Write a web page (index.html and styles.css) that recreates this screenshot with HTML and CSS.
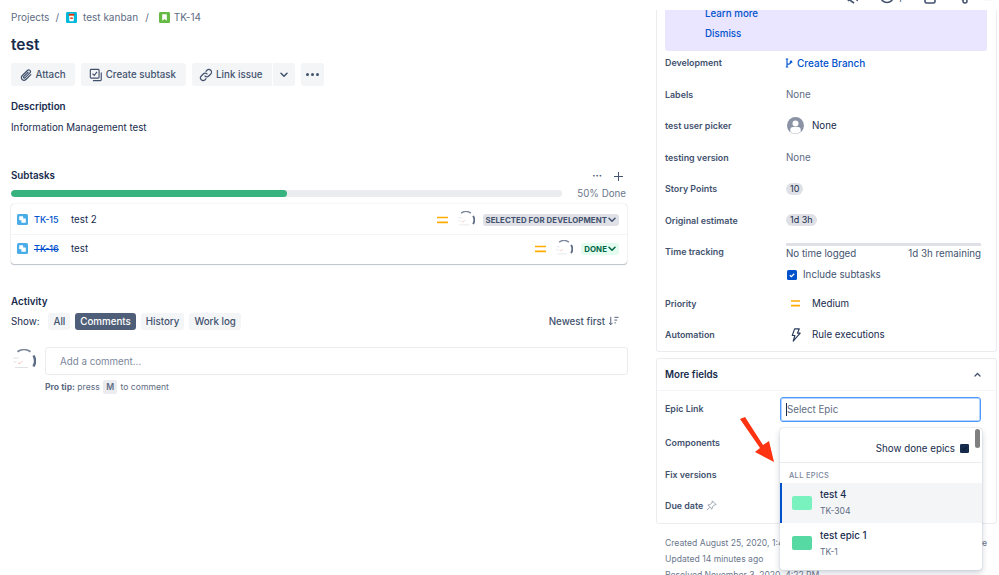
FILE: index.html
```html
<!DOCTYPE html>
<html lang="en">
<head>
<meta charset="utf-8">
<title>TK-14 test</title>
<link rel="stylesheet" href="styles.css">
</head>
<body>
<svg class="defs" width="0" height="0" aria-hidden="true">
  <symbol id="avatar" viewBox="0 0 24 24">
    <circle cx="12" cy="12" r="11.5" fill="#fff"/>
    <path d="M5.500 2.800A11 11 0 0 1 18.500 2.800" fill="none" stroke="#7a869a" stroke-width="1.800"/>
    <path d="M21.500 6.500A11 11 0 0 1 21.500 17.500" fill="none" stroke="#5e6c84" stroke-width="2.400"/>
    <path d="M1.500 9h5M1.500 13h3M3 18.500h13" stroke="#dfe1e6" stroke-width="1"/>
    <path d="M6 14l2 .5 2.500-2.500" fill="none" stroke="#eeb3a8" stroke-width=".8"/>
  </symbol>
  <symbol id="medium" viewBox="0 0 12 8">
    <path d="M.5 1.200h11M.5 6.600h11" stroke="#ffab00" stroke-width="1.700" stroke-linecap="round"/>
  </symbol>
  <symbol id="subtask" viewBox="0 0 10 10">
    <rect width="10" height="10" rx="1.400" fill="#4bade8"/>
    <rect x="2" y="2" width="3.600" height="3.600" rx=".6" fill="#fff"/>
    <rect x="4" y="4" width="4" height="4" rx=".6" fill="#fff"/>
  </symbol>
  <symbol id="chev" viewBox="0 0 8 6">
    <path d="M1 1.200l3 3 3-3" fill="none" stroke="currentColor" stroke-width="1.500" stroke-linecap="round" stroke-linejoin="round"/>
  </symbol>
</svg>

<div class="page">
  <main class="main">
    <nav class="crumbs">
      <span>Projects</span><span class="sep">/</span>
      <svg class="crumb-icon" viewBox="0 0 12 12"><rect width="12" height="12" rx="1.500" fill="#00b8d9"/><rect x="3.500" y="2" width="5" height="8" rx="1" fill="#fff"/><rect x="3" y="2" width="6" height="2" fill="#de350b"/><rect x="4.500" y="6" width="3" height="1.500" fill="#de350b"/></svg>
      <span>test kanban</span><span class="sep sep-wide">/</span>
      <svg class="crumb-icon crumb-icon-tight" viewBox="0 0 12 12"><rect width="12" height="12" rx="1.500" fill="#65ba43"/><path d="M3.500 2.500h5v7L6 7.600 3.500 9.500z" fill="#fff"/></svg>
      <span>TK-14</span>
    </nav>
    <h1 class="title">test</h1>
    <div class="actions">
      <button class="btn">
        <svg class="btn-icon" viewBox="0 0 16 16"><path d="M13.500 7.500l-5.600 5.600a3 3 0 0 1-4.300-4.300l6-6a2 2 0 0 1 2.900 2.800l-5.700 5.700a1 1 0 0 1-1.400-1.400l5-5" fill="none" stroke="#42526e" stroke-width="1.400" stroke-linecap="round"/></svg>
        Attach
      </button>
      <button class="btn">
        <svg class="btn-icon" viewBox="0 0 16 16"><rect x="1.500" y="1.500" width="10" height="10" rx="1" fill="none" stroke="#42526e" stroke-width="1.300"/><path d="M4 6.500l2 2 3.200-4" fill="none" stroke="#42526e" stroke-width="1.300"/><path d="M14 5v8.500a1 1 0 0 1-1 1H4.500" fill="none" stroke="#42526e" stroke-width="1.300"/></svg>
        Create subtask
      </button>
      <div class="btn-group">
        <button class="btn">
          <svg class="btn-icon" viewBox="0 0 16 16"><path d="M6.800 9.200a3 3 0 0 0 4.300 0l2.300-2.300a3 3 0 0 0-4.300-4.300L8 3.800M9.200 6.800a3 3 0 0 0-4.300 0L2.600 9.100a3 3 0 0 0 4.300 4.300L8 12.200" fill="none" stroke="#42526e" stroke-width="1.400" stroke-linecap="round"/></svg>
          Link issue
        </button>
        <button class="btn btn-caret"><svg class="chev"><use href="#chev"/></svg></button>
      </div>
      <button class="btn btn-more"><span class="dot"></span><span class="dot"></span><span class="dot"></span></button>
    </div>

    <h2 class="section-title desc-title">Description</h2>
    <p class="desc">Information Management test</p>

    <section class="subtasks">
      <div class="sub-head">
        <h2 class="section-title">Subtasks</h2>
        <div class="sub-tools">
          <span class="mini-dots">···</span>
          <svg class="plus" viewBox="0 0 10 10"><path d="M5 0v10M0 5h10" stroke="#42526e" stroke-width="1.100"/></svg>
        </div>
      </div>
      <div class="progress-row">
        <div class="progress"><div class="progress-fill"></div></div>
        <span class="progress-label">50% Done</span>
      </div>
      <div class="sub-box">
        <div class="sub-row">
          <svg class="sub-icon"><use href="#subtask"/></svg>
          <a class="sub-key">TK-15</a>
          <span class="sub-name">test 2</span>
          <svg class="prio"><use href="#medium"/></svg>
          <svg class="avatar-sm"><use href="#avatar"/></svg>
          <span class="lozenge lz-grey">SELECTED FOR DEVELOPMENT <svg class="lz-chev"><use href="#chev"/></svg></span>
        </div>
        <div class="sub-row">
          <svg class="sub-icon"><use href="#subtask"/></svg>
          <a class="sub-key strike">TK-16</a>
          <span class="sub-name">test</span>
          <svg class="prio"><use href="#medium"/></svg>
          <svg class="avatar-sm"><use href="#avatar"/></svg>
          <span class="lozenge lz-green">DONE <svg class="lz-chev"><use href="#chev"/></svg></span>
        </div>
      </div>
    </section>

    <section class="activity">
      <h2 class="section-title">Activity</h2>
      <div class="activity-bar">
        <span class="show-label">Show:</span>
        <button class="tab">All</button>
        <button class="tab tab-on">Comments</button>
        <button class="tab">History</button>
        <button class="tab">Work log</button>
        <span class="newest">Newest first
          <svg class="sort" viewBox="0 0 12 10"><path d="M3 .5v8.500M1 7l2 2 2-2M7 1h4.500M7 4h3M7 7h1.500" fill="none" stroke="#42526e" stroke-width="1"/></svg>
        </span>
      </div>
      <div class="comment-row">
        <svg class="avatar-lg"><use href="#avatar"/></svg>
        <div class="comment-input">Add a comment...</div>
      </div>
      <p class="protip"><b>Pro tip:</b> press <kbd>M</kbd> to comment</p>
    </section>
  </main>

  <aside class="side">
    <div class="topbar">
      <svg class="top-icon" viewBox="0 0 16 16"><path d="M8 1l5 3-2 9M6 8l-4 5" fill="none" stroke="#42526e" stroke-width="1.600"/><path d="M3 11.500L8 15" fill="none" stroke="#42526e" stroke-width="1.600"/></svg>
      <span class="watch">
        <svg class="top-icon" viewBox="0 0 16 16"><circle cx="8" cy="8" r="6.500" fill="none" stroke="#42526e" stroke-width="1.500"/><circle cx="8" cy="8" r="2.500" fill="#42526e"/></svg>
        <span class="watch-n">1</span>
      </span>
      <svg class="top-icon top-copy" viewBox="0 0 16 16"><rect x="3" y="3" width="10" height="12" rx="1.500" fill="none" stroke="#42526e" stroke-width="1.600"/><path d="M6 1v8" stroke="#42526e" stroke-width="1.600"/></svg>
      <svg class="top-icon" viewBox="0 0 16 16"><circle cx="3" cy="8" r="2" fill="none" stroke="#42526e" stroke-width="1.500"/><circle cx="13" cy="13" r="2" fill="none" stroke="#42526e" stroke-width="1.500"/><path d="M5 9l6 3" stroke="#42526e" stroke-width="1.500"/></svg>
      <span class="top-dots">···</span>
    </div>

    <div class="card details">
      <div class="banner">
        <a>Learn more</a>
        <a>Dismiss</a>
      </div>
      <div class="field-list">
        <div class="field">
          <span class="label">Development</span>
          <a class="value link">
            <svg class="branch" viewBox="0 0 10 12"><path d="M2.500 1v10M1 1h3M1 11h3M2.500 7.500c4 0 5-1 5-3.500M6 5.500L7.500 3.500 9 5.500" fill="none" stroke="#0052cc" stroke-width="1.400"/></svg>
            Create Branch
          </a>
        </div>
        <div class="field"><span class="label">Labels</span><span class="value muted">None</span></div>
        <div class="field">
          <span class="label">test user picker</span>
          <span class="value">
            <svg class="user-icon" viewBox="0 0 18 18"><circle cx="9" cy="9" r="9" fill="#8993a4"/><circle cx="9" cy="6.800" r="3.200" fill="#fff"/><path d="M3.500 15.500v-2a3 3 0 0 1 3-3h5a3 3 0 0 1 3 3v2a9 9 0 0 1-11 0z" fill="#fff"/></svg>
            <span class="val-text">None</span>
          </span>
        </div>
        <div class="field"><span class="label">testing version</span><span class="value muted">None</span></div>
        <div class="field"><span class="label">Story Points</span><span class="value"><span class="pill">10</span></span></div>
        <div class="field"><span class="label">Original estimate</span><span class="value"><span class="pill">1d 3h</span></span></div>
        <div class="field">
          <span class="label">Time tracking</span>
          <div class="value time">
            <div class="time-bar"></div>
            <div class="time-text"><span>No time logged</span><span>1d 3h remaining</span></div>
          </div>
        </div>
        <label class="include">
          <svg class="check" viewBox="0 0 10 10"><rect width="10" height="10" rx="1.500" fill="#0052cc"/><path d="M2.800 5.200l1.600 1.500 2.800-3" fill="none" stroke="#fff" stroke-width="1.300"/></svg>
          Include subtasks
        </label>
        <div class="field">
          <span class="label">Priority</span>
          <span class="value"><span class="ico-cell"><svg class="prio-sm" viewBox="0 0 9 7"><path d="M.5 1h8M.5 5.600h8" stroke="#ffab00" stroke-width="1.600" stroke-linecap="round"/></svg></span><span class="val-text">Medium</span></span>
        </div>
        <div class="field">
          <span class="label">Automation</span>
          <span class="value"><span class="ico-cell"><svg class="bolt" viewBox="0 0 10 15"><path d="M3.500 1h5L6.500 5.500H9.500L2 14l1.800-6H1z" fill="none" stroke="#253858" stroke-width="1.200" stroke-linejoin="round"/></svg></span><span class="val-text">Rule executions</span></span>
        </div>
      </div>
    </div>

    <div class="card more">
      <div class="more-head">
        <span>More fields</span>
        <svg class="caret-up" viewBox="0 0 8 6"><path d="M1 4.800l3-3 3 3" fill="none" stroke="#42526e" stroke-width="1.500" stroke-linecap="round"/></svg>
      </div>
      <div class="more-list">
        <div class="field epic-field">
          <span class="label">Epic Link</span>
          <div class="epic-input"><span class="caret-line"></span>Select Epic</div>
        </div>
        <div class="field"><span class="label">Components</span></div>
        <div class="field"><span class="label">Fix versions</span></div>
        <div class="field">
          <span class="label">Due date
            <svg class="pin" viewBox="0 0 12 12"><path d="M7 1l4 4-2 .5-2 2L6.500 10 2 5.500 4.500 5l2-2zM4 8l-3 3" fill="none" stroke="#7a869a" stroke-width=".8"/></svg>
          </span>
        </div>
      </div>
    </div>

    <div class="meta">
      <div class="meta-row"><span>Created August 25, 2020, 1:42 PM</span><a class="configure">Configure</a></div>
      <div>Updated 14 minutes ago</div>
      <div>Resolved November 3, 2020, 4:22 PM</div>
    </div>
  </aside>

  <div class="dropdown">
    <div class="scroll-thumb"></div>
    <div class="dd-top">Show done epics <svg class="dd-check" viewBox="0 0 10 10"><rect width="10" height="10" rx="1.500" fill="#172b4d"/><path d="M2.800 5.200l1.600 1.500 2.800-3" fill="none" stroke="#0b1a33" stroke-width="1.200"/></svg></div>
    <div class="dd-group">ALL EPICS</div>
    <div class="dd-opt dd-active">
      <span class="swatch swatch-a"></span>
      <span class="dd-text"><span class="dd-name">test 4</span><span class="dd-key">TK-304</span></span>
    </div>
    <div class="dd-opt">
      <span class="swatch swatch-b"></span>
      <span class="dd-text"><span class="dd-name">test epic 1</span><span class="dd-key">TK-1</span></span>
    </div>
  </div>

  <svg class="red-arrow" viewBox="0 0 36 47"><path d="M1 3L6 1 24 29 30 25 35 46 16 36 21 32z" fill="#ff3211"/></svg>
</div>
</body>
</html>
```

FILE: styles.css
```css
* { box-sizing: border-box; }
html, body { margin: 0; padding: 0; background: #fff; }
body {
  font-family: Inter, "Liberation Sans", sans-serif;
  font-size: 9.750px;
  color: #172b4d;
  overflow: hidden;
}
.defs { display: block; height: 0; }
.page { position: relative; display: flex; width: 999px; height: 575px; overflow: hidden; }
a { color: #0052cc; }
button { font: inherit; border: 0; color: inherit; }

.main { width: 617px; flex: none; margin-left: 11px; margin-right: 28px; }
.crumbs { height: 12px; margin-top: 11px; display: flex; align-items: center; color: #5e6c84; font-size: 10px; }
.sep { margin: 0 7px 0 6px; }
.sep-wide { margin: 0 10px 0 7px; }
.crumb-icon { width: 11px; height: 11px; margin-right: 6px; }
.crumb-icon-tight { margin-right: 4px; }
.title { margin: 10px 0 0; font-size: 15.500px; line-height: 24px; font-weight: 600; color: #172b4d; }
.actions { display: flex; gap: 6px; margin-top: 6px; }
.btn {
  height: 23px; display: flex; align-items: center; gap: 3px;
  padding: 0 9.500px 0 7.500px; background: #f4f5f7; border-radius: 3px; color: #42526e; font-weight: 500;
}
.btn-icon { width: 14px; height: 14px; }
.btn-group { display: flex; gap: 1px; }
.btn-group .btn:first-child { border-radius: 3px 0 0 3px; }
.btn-caret { width: 22px; padding: 0; justify-content: center; border-radius: 0 3px 3px 0; }
.chev { width: 8px; height: 6px; }
.btn-more { width: 23px; padding: 0; justify-content: center; gap: 2px; }
.dot { width: 3px; height: 3px; border-radius: 50%; background: #42526e; }

.section-title { margin: 0; font-size: 9.800px; line-height: 14px; font-weight: 600; color: #172b4d; }
.desc-title { margin-top: 14px; }
.desc { margin: 7px 0 0; line-height: 14px; color: #172b4d; }

.subtasks { margin-top: 34px; }
.sub-head { display: flex; justify-content: space-between; align-items: center; height: 14px; }
.sub-tools { display: flex; align-items: center; gap: 12px; padding-right: 5px; }
.mini-dots { font-weight: 700; color: #42526e; line-height: 10px; }
.plus { width: 9px; height: 9px; }
.progress-row { display: flex; align-items: center; margin-top: 4px; padding-right: 2px; height: 12px; }
.progress { width: 551px; height: 7px; border-radius: 4px; background: #ebecf0; overflow: hidden; }
.progress-fill { width: 50%; height: 100%; background: #36b37e; border-radius: 4px; }
.progress-label { margin-left: auto; color: #6b778c; }
.sub-box {
  margin: 5px 1px 0 0; padding: 1px 0; border-radius: 3px;
  box-shadow: 0 1px 1px rgba(9,30,66,.25), 0 0 1px rgba(9,30,66,.31);
}
.sub-row { height: 29px; display: flex; align-items: center; padding: 0 8px 0 6px; }
.sub-row + .sub-row { box-shadow: inset 0 1px 0 #f4f5f7; }
.sub-icon { width: 11px; height: 11px; flex: none; }
.sub-key { margin-left: 6px; width: 37px; font-size: 9px; font-weight: 500; color: #0052cc; }
.strike { text-decoration: line-through; }
.sub-name { flex: 1; color: #172b4d; }
.prio { width: 11px; height: 8px; flex: none; }
.avatar-sm { width: 18px; height: 18px; flex: none; margin: 0 8px 0 9px; }
.lozenge {
  display: flex; align-items: center; gap: 1px; height: 12px; padding: 0 3px;
  border-radius: 3px; font-size: 7.800px; font-weight: 700; letter-spacing: .1px;
}
.lz-grey { background: #dfe1e6; color: #42526e; }
.lz-green { background: #e3fcef; color: #006644; }
.lz-chev { width: 8px; height: 6px; }

.activity { margin-top: 31px; }
.activity-bar { display: flex; align-items: center; gap: 5px; margin-top: 3px; height: 18px; }
.show-label { color: #172b4d; margin-right: 4px; }
.tab { height: 17px; padding: 0 5px; background: #f4f5f7; border-radius: 3px; color: #42526e; font-weight: 500; }
.tab-on { background: #505f79; color: #fff; }
.newest { margin-left: auto; margin-right: 9px; display: flex; align-items: center; gap: 3px; color: #42526e; font-weight: 500; }
.sort { width: 11px; height: 10px; }
.comment-row { display: flex; align-items: center; margin-top: 17px; }
.avatar-lg { width: 24px; height: 24px; flex: none; margin: 0 9px 0 1px; }
.comment-input {
  flex: 1; height: 28px; display: flex; align-items: center; padding-left: 14px;
  border: 1px solid #ebecf0; border-radius: 3px; color: #7a869a;
}
.protip { margin: 5px 0 0 34px; font-size: 8.600px; line-height: 14px; color: #5e6c84; }
kbd { display: inline-block; padding: 0 3px; line-height: 11px; background: #ebecf0; border-radius: 2px; font: inherit; font-weight: 600; margin: 0 1px; }

.side { width: 343px; flex: none; }
.topbar {
  position: relative; z-index: 1; height: 10px; margin-left: -6px; overflow: hidden;
  display: flex; align-items: flex-end; gap: 14px; padding: 0 0 6px 196px;
  background: #fff;
}
.top-icon { width: 16px; height: 16px; flex: none; }
.watch { display: flex; align-items: flex-end; gap: 3px; margin-left: 3px; }
.watch-n { line-height: 10px; font-size: 9px; color: #42526e; }
.top-copy { margin-left: 6px; }
.top-dots { color: #c1c7d0; line-height: 8px; margin-left: 2px; }

.card { border: 1px solid #ebecf0; border-radius: 3px; padding: 0 8px; margin-right: 2px; }
.details { border-top: 0; border-radius: 0 0 3px 3px; height: 342px; }
.banner {
  height: 41px; margin-right: 1px; padding: 0 0 10.500px 40px; background: #eae6ff; border-radius: 0 0 3px 3px;
  display: flex; flex-direction: column; justify-content: flex-end; gap: 6px;
}
.banner a { line-height: 14px; font-weight: 500; color: #0052cc; }
.field-list { margin-top: -4px; }
.field { display: flex; height: 31.500px; align-items: center; }
.label { width: 121px; flex: none; font-size: 8.900px; font-weight: 600; color: #42526e; display: flex; align-items: center; gap: 3px; }
.value { display: flex; align-items: center; flex: 1; }
.muted { color: #5e6c84; }
.link { color: #0052cc; font-weight: 500; font-size: 10px; gap: 4px; margin-left: -1px; }
.branch { width: 8px; height: 10px; }
.user-icon { width: 17px; height: 17px; margin: 0 8px 0 1px; }
.val-text { color: #172b4d; }
.pill { padding: 0 4px; height: 12px; line-height: 12px; border-radius: 6px; background: #dfe1e6; font-size: 9px; color: #172b4d; }
.time { display: block; margin-right: 7px; }
.time-bar { height: 3px; background: #dfe1e6; }
.time-text { display: flex; justify-content: space-between; line-height: 13px; margin-top: 1px; color: #42526e; }
.include { display: flex; align-items: center; gap: 6px; height: 14px; margin: 0 0 6px 122px; color: #42526e; }
.check { width: 10px; height: 10px; }
.ico-cell { width: 26px; padding-left: 5px; display: flex; }
.prio-sm { width: 9px; height: 7px; }
.bolt { width: 10px; height: 14px; }

.more { margin-top: 6px; height: 166px; }
.more-head { height: 32px; display: flex; justify-content: space-between; align-items: center; font-weight: 600; margin: 0 -8px; padding: 0 15px 0 8px; border-bottom: 1px solid #f4f5f7; }
.caret-up { width: 7px; height: 5px; }
.more-list { padding-top: 3px; }
.epic-field { height: 33px; align-items: flex-start; padding-top: 3px; }
.epic-field .label { padding-top: 6px; }
.epic-input {
  width: 201px; height: 25px; margin-left: -6px; display: flex; align-items: center; padding-left: 5px;
  border: 1px solid #4c9aff; border-radius: 3px; color: #5e6c84; box-shadow: 0 0 0 1px #b3d4ff inset;
}
.caret-line { width: 1px; height: 13px; background: #172b4d; }
.pin { width: 11px; height: 11px; }

.meta { margin: 11px 12px 0 9px; line-height: 16px; color: #6b778c; font-size: 8.600px; }
.meta-row { display: flex; justify-content: space-between; }
.configure { color: #6b778c; font-weight: 500; }

.dropdown {
  position: absolute; left: 780px; top: 428px; width: 202px; height: 142px;
  background: #fff; border-radius: 3px;
  box-shadow: 0 0 1px rgba(9,30,66,.35), 0 3px 6px rgba(9,30,66,.2);
}
.scroll-thumb { position: absolute; right: 2px; top: 1px; width: 5px; height: 19px; border-radius: 3px; background: #7f7f7f; }
.dd-top { height: 34.500px; display: flex; align-items: center; justify-content: flex-end; gap: 5px; padding: 7px 13px 0 0; color: #172b4d; border-bottom: 1px solid #ebecf0; }
.dd-check { width: 9px; height: 9px; }
.dd-group { height: 20px; padding: 6px 0 0 9px; font-size: 7.500px; font-weight: 500; letter-spacing: .3px; color: #7a869a; line-height: 13px; }
.dd-opt { height: 40.500px; display: flex; align-items: center; padding-left: 12px; gap: 8px; }
.dd-active { background: #f4f5f7; border-left: 2px solid #0052cc; padding-left: 10px; }
.swatch { width: 20px; height: 14px; border-radius: 2px; flex: none; }
.swatch-a { background: #79f2c0; }
.swatch-b { background: #57d9a3; }
.dd-text { display: flex; flex-direction: column; gap: 3px; }
.dd-name { line-height: 14px; color: #172b4d; font-weight: 500; }
.dd-key { line-height: 12px; font-size: 8.600px; color: #5e6c84; }

.red-arrow { position: absolute; left: 739px; top: 416px; width: 36px; height: 47px; }
```
